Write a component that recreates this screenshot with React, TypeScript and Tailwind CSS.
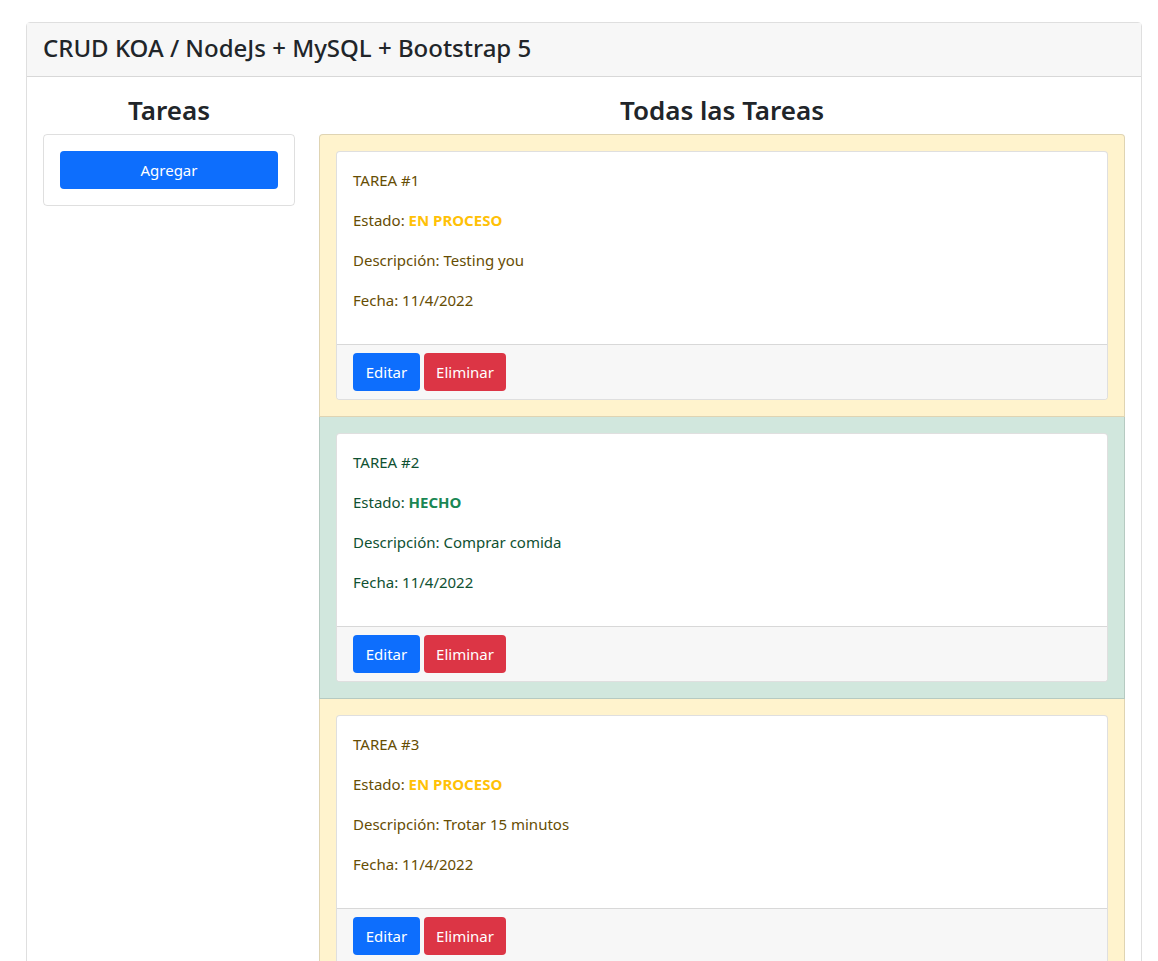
import React from "react";

type Task = { id: number; estado: "EN PROCESO" | "HECHO"; desc: string; fecha: string };

const tasks: Task[] = [
  { id: 1, estado: "EN PROCESO", desc: "Testing you", fecha: "11/4/2022" },
  { id: 2, estado: "HECHO", desc: "Comprar comida", fecha: "11/4/2022" },
  { id: 3, estado: "EN PROCESO", desc: "Trotar 15 minutos", fecha: "11/4/2022" },
];

function TaskItem({ t, first }: { t: Task; first: boolean }) {
  const done = t.estado === "HECHO";
  return (
    <div
      className={`p-4 border-x border-b border-black/[0.125] ${first ? "border-t rounded-t-[4px]" : ""} ${
        done ? "bg-[#d1e7dd] text-[#0f5132]" : "bg-[#fff3cd] text-[#664d03]"
      }`}
    >
      <div className="bg-white border border-black/[0.125] rounded-[4px] overflow-hidden">
        <div className="p-4 text-[15px]">
          <p className="leading-6 mb-4">TAREA #{t.id}</p>
          <p className="leading-6 mb-4">
            Estado:{" "}
            <span className={`font-bold ${done ? "text-[#198754]" : "text-[#ffc107]"}`}>{t.estado}</span>
          </p>
          <p className="leading-6 mb-4">Descripción: {t.desc}</p>
          <p className="leading-6 mb-4">Fecha: {t.fecha}</p>
        </div>
        <div className="bg-[#f7f7f7] border-t border-black/[0.125] px-4 py-2 flex gap-1">
          <button className="bg-[#0d6efd] text-white rounded-[4px] h-[38px] w-[67px] leading-6 text-[15px]">Editar</button>
          <button className="bg-[#dc3545] text-white rounded-[4px] h-[38px] w-[82px] leading-6 text-[15px]">Eliminar</button>
        </div>
      </div>
    </div>
  );
}

export default function App() {
  return (
    <div
      className="min-h-[961px] bg-white text-[#212529] text-base"
      style={{ fontFamily: '"Noto Sans", "Open Sans", sans-serif' }}
    >
      <div className="pt-[22px] pl-[26px]">
        <div className="w-[1116px] border border-black/[0.125] rounded-t-[4px] min-h-[950px]">
          <div className="bg-[#f7f7f7] border-b border-black/[0.125] px-4 pb-[4px] h-[54px] flex items-center">
            <h4 className="text-[24px] font-medium leading-[29px]">CRUD KOA / NodeJs + MySQL + Bootstrap 5</h4>
          </div>
          <div className="p-4 flex gap-6">
            <div className="w-[252px] shrink-0">
              <h3 className="text-[26px] font-semibold leading-[32px] text-center mb-2 pt-[1px]">Tareas</h3>
              <div className="border border-black/[0.125] rounded-[4px] p-4">
                <button className="w-full h-[38px] bg-[#0d6efd] text-white rounded-[4px] leading-6 text-[15px]">Agregar</button>
              </div>
            </div>
            <div className="flex-1">
              <h3 className="text-[26px] font-semibold leading-[32px] text-center mb-2 pt-[1px]">Todas las Tareas</h3>
              <div>
                {tasks.map((t, i) => (
                  <TaskItem key={t.id} t={t} first={i === 0} />
                ))}
              </div>
            </div>
          </div>
        </div>
      </div>
    </div>
  );
}
